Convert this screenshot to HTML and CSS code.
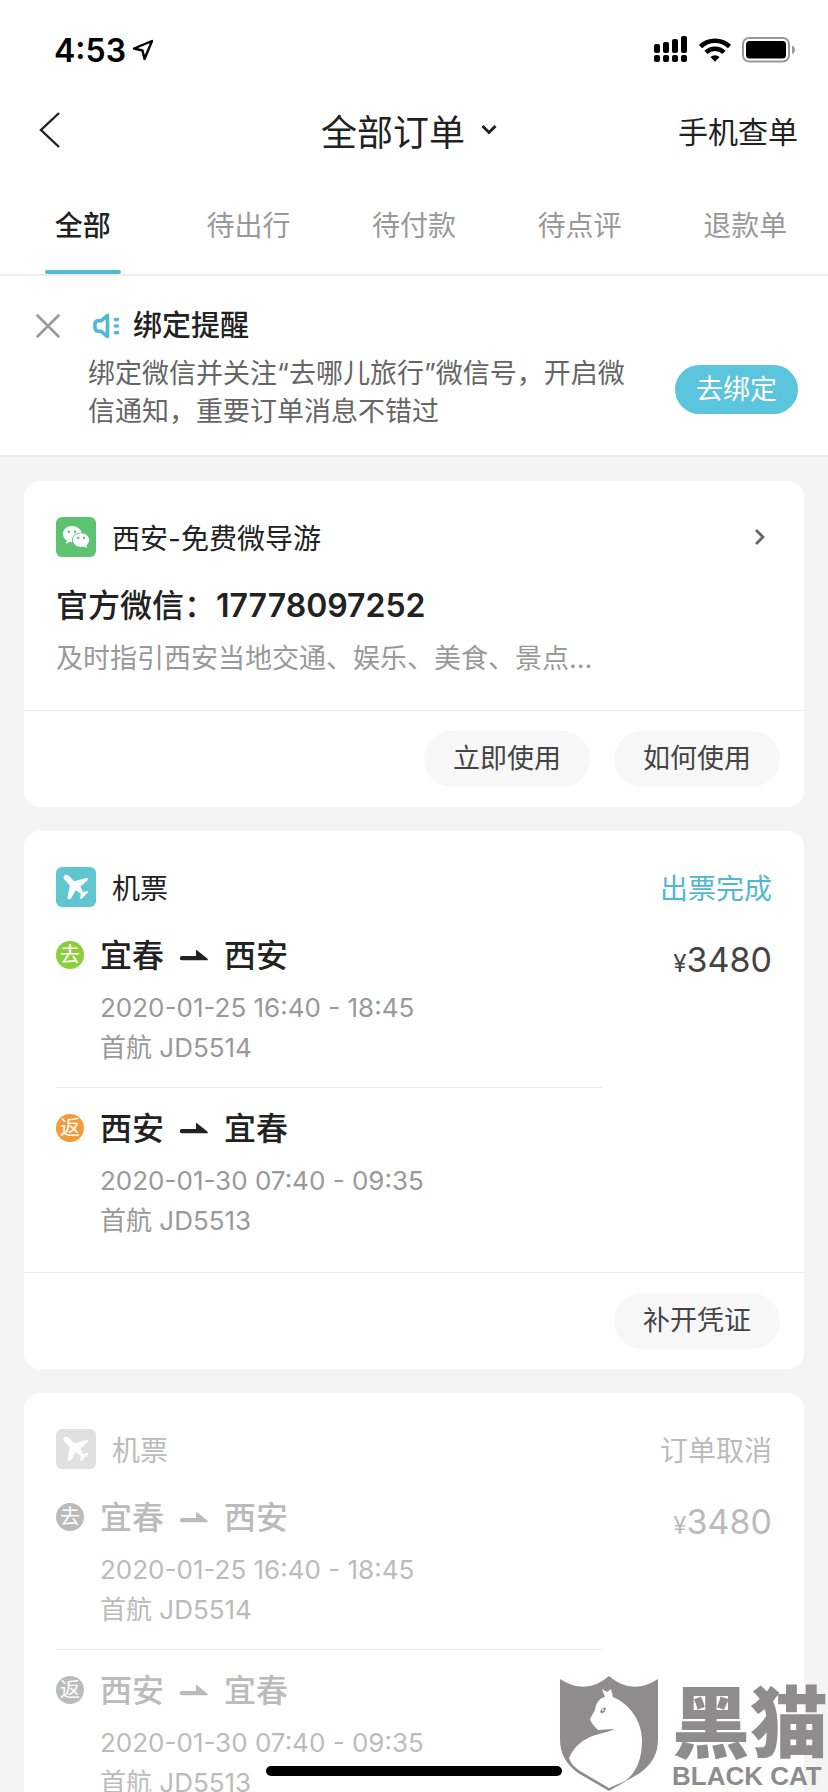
FILE: index.html
```html
<!DOCTYPE html>
<html lang="zh-CN">
<head>
    <meta charset="UTF-8">
    <meta name="viewport" content="width=device-width, initial-scale=1.0">
    <title>全部订单</title>
    <link rel="stylesheet" href="styles.css">
</head>
<body>

    <!-- 公用图标 -->
    <svg class="symbols" aria-hidden="true">
        <symbol id="plane" viewBox="0 0 40 40">
            <path fill="#fff" d="M8.4 8.4c1.3-1.1 3.2-.7 4.6.6l5.300 5.200 12-3.200c1.600-.4 2.500 1.300 1.300 2.300l-7.200 6.100 2.300 5.600 4.600-.9c.8-.1 1.100.7.6 1.300l-6.300 6.400c-.6.6-1.400.2-1.300-.6l.4-4.600-4.900-3.400-4.900 8.200c-.8 1.300-3.600 1-3.500-.7l2.500-12.300-5.400-5.900c-1.200-1.400-1.300-3-.1-4.100z"/>
        </symbol>
        <symbol id="arrow" viewBox="0 0 28 12">
            <path fill="currentColor" d="M2 6h14V.8c0-.7.5-.9 1-.6l10.300 8.200c.9.800.6 1.900-.6 1.900H2a2 2 0 0 1 0-4.300z"/>
        </symbol>
    </svg>

    <div class="page">

        <!-- 状态栏 -->
        <div class="status-bar">
            <span class="time">4:53</span>
            <svg class="location" width="22" height="22" viewBox="0 0 22 22"><path d="M2 9.500 20 2l-7.500 18-2-8.500z" fill="none" stroke="#000" stroke-width="2.400" stroke-linejoin="round"/></svg>
            <svg class="signal" width="34" height="28" viewBox="0 0 34 28">
                <rect x="0" y="8" width="6" height="9" rx="2"/><rect x="9" y="6" width="6" height="11" rx="2"/>
                <rect x="18" y="3" width="6" height="14" rx="2"/><rect x="27" y="0" width="6" height="17" rx="2"/>
                <rect x="0" y="19" width="6" height="7" rx="2"/><rect x="9" y="19" width="6" height="7" rx="2"/>
                <rect x="18" y="19" width="6" height="7" rx="2"/><rect x="27" y="19" width="6" height="7" rx="2"/>
            </svg>
            <svg class="wifi" width="32" height="24" viewBox="0 0 32 24">
                <path d="M1.500 8.600a21 21 0 0 1 29 0" fill="none" stroke="#000" stroke-width="4.600"/>
                <path d="M7 14.300a13 13 0 0 1 18 0" fill="none" stroke="#000" stroke-width="4.600"/>
                <path d="M11.500 19a6.500 6.500 0 0 1 9 0L16 23.700z"/>
            </svg>
            <svg class="battery" width="53" height="26" viewBox="0 0 53 26">
                <rect x="1" y="1" width="46" height="23.500" rx="6" fill="none" stroke="#999" stroke-width="2"/>
                <rect x="4" y="4" width="40" height="17.500" rx="3.500"/>
                <path d="M50 8.500c4 1.600 4 7 0 8.600z" fill="#999"/>
            </svg>
        </div>

        <!-- 标题栏 -->
        <header class="nav">
            <button class="back" aria-label="返回">
                <svg width="22" height="36" viewBox="0 0 22 36"><path d="M20 1 2 18l18 17" fill="none" stroke="#222" stroke-width="2.400"/></svg>
            </button>
            <button class="nav-title">全部订单
                <svg width="16" height="12" viewBox="0 0 16 12"><path d="m1.500 2 6.500 6.500L14.500 2" fill="none" stroke="#222" stroke-width="3"/></svg>
            </button>
            <a class="nav-link" href="#">手机查单</a>
        </header>

        <nav class="tabs">
            <a class="tab active" href="#">全部</a>
            <a class="tab" href="#">待出行</a>
            <a class="tab" href="#">待付款</a>
            <a class="tab" href="#">待点评</a>
            <a class="tab" href="#">退款单</a>
        </nav>

        <!-- 绑定提醒 -->
        <section class="notice">
            <button class="close" aria-label="关闭">
                <svg width="24" height="24" viewBox="0 0 24 24"><path d="m1.500 1.500 21 21m0-21-21 21" stroke="#999" stroke-width="2.600" stroke-linecap="round"/></svg>
            </button>
            <div class="notice-text">
                <h2>
                    <svg width="28" height="26" viewBox="0 0 28 26" fill="none" stroke="#4fb8d3"><path d="M14.500 2.500v21L8 18.200H5.500Q2 18.200 2 15v-4q0-3.200 3.500-3.200H8z" stroke-width="3.600" stroke-linejoin="round"/><path d="M22.500 6.500h2m-2 6.500h2m-2 6.800h2" stroke-width="3.600" stroke-linecap="round"/></svg>
                    绑定提醒
                </h2>
                <p>绑定微信并关注“去哪儿旅行”微信号，开启微信通知，重要订单消息不错过</p>
            </div>
            <button class="bind">去绑定</button>
        </section>

        <main class="orders">

            <!-- 微导游 -->
            <article class="card">
                <div class="card-body">
                    <div class="card-head">
                        <span class="icon wechat">
                            <svg width="40" height="40" viewBox="0 0 40 40">
                                <path fill="#fff" d="M16 9c5 0 9 3 9.600 6.500C20 15.500 16 19 16 23v2.300l-2.700-.3-3.400 2 .9-3.300C8.500 22 7 19.800 7 17c0-4.500 4-8 9-8z"/>
                                <path fill="#fff" d="M25 16.200c4.600 0 8.200 3 8.200 6.900 0 2.300-1.100 4-2.900 5.300l.8 2.900-3.200-1.700c-6 1.500-11.100-2-11.100-6.500 0-3.900 3.600-6.900 8.200-6.900z"/>
                                <g fill="#5dc272"><circle cx="13" cy="14.800" r="1.300"/><circle cx="19" cy="14.800" r="1.300"/><circle cx="22.300" cy="21" r="1.200"/><circle cx="28" cy="21" r="1.200"/></g>
                            </svg>
                        </span>
                        <span class="card-title">西安-免费微导游</span>
                        <svg class="more" width="12" height="18" viewBox="0 0 12 18"><path d="m2 2 7 7-7 7" fill="none" stroke="#666" stroke-width="2.800"/></svg>
                    </div>
                    <h3 class="account">官方微信：<span>17778097252</span></h3>
                    <p class="intro">及时指引西安当地交通、娱乐、美食、景点...</p>
                </div>
                <div class="card-foot">
                    <button class="button">立即使用</button>
                    <button class="button">如何使用</button>
                </div>
            </article>

            <!-- 机票：出票完成 -->
            <article class="card">
                <div class="card-body">
                    <div class="card-head">
                        <span class="icon flight"><svg width="40" height="40"><use href="#plane"/></svg></span>
                        <span class="card-title">机票</span>
                        <span class="state">出票完成</span>
                    </div>
                    <div class="trip">
                        <div class="legs">
                            <div class="leg">
                                <span class="badge go">去</span>
                                <div>
                                    <h3 class="route">宜春 <svg width="28" height="12"><use href="#arrow"/></svg> 西安</h3>
                                    <p>2020-01-25 16:40 - 18:45</p>
                                    <p>首航 JD5514</p>
                                </div>
                            </div>
                            <div class="leg">
                                <span class="badge return">返</span>
                                <div>
                                    <h3 class="route">西安 <svg width="28" height="12"><use href="#arrow"/></svg> 宜春</h3>
                                    <p>2020-01-30 07:40 - 09:35</p>
                                    <p>首航 JD5513</p>
                                </div>
                            </div>
                        </div>
                        <div class="price"><small>¥</small>3480</div>
                    </div>
                </div>
                <div class="card-foot">
                    <button class="button">补开凭证</button>
                </div>
            </article>

            <!-- 机票：订单取消 -->
            <article class="card cancelled">
                <div class="card-body">
                    <div class="card-head">
                        <span class="icon flight"><svg width="40" height="40"><use href="#plane"/></svg></span>
                        <span class="card-title">机票</span>
                        <span class="state">订单取消</span>
                    </div>
                    <div class="trip">
                        <div class="legs">
                            <div class="leg">
                                <span class="badge go">去</span>
                                <div>
                                    <h3 class="route">宜春 <svg width="28" height="12"><use href="#arrow"/></svg> 西安</h3>
                                    <p>2020-01-25 16:40 - 18:45</p>
                                    <p>首航 JD5514</p>
                                </div>
                            </div>
                            <div class="leg">
                                <span class="badge return">返</span>
                                <div>
                                    <h3 class="route">西安 <svg width="28" height="12"><use href="#arrow"/></svg> 宜春</h3>
                                    <p>2020-01-30 07:40 - 09:35</p>
                                    <p>首航 JD5513</p>
                                </div>
                            </div>
                        </div>
                        <div class="price"><small>¥</small>3480</div>
                    </div>
                </div>
            </article>
        </main>

        <div class="home-bar"></div>

        <!-- 水印 -->
        <div class="watermark">
            <svg width="98" height="116" viewBox="0 0 98 116">
                <path fill="#8f8c8e" d="M0 3Q26 20 49 0 72 20 98 3V63C98 78 92 88 80 97L49 115 18 97C6 88 0 78 0 63z"/>
                <path fill="#fff" d="M42 13 47 16 51 13 53 21C70 28 82 46 82 64 82 84 76 97 65 105L49 112 20 95C13 90 11 87 9 82 17 65 30 60 43 57 50 55 53 54 54 53L38 54C35 51 31 47 30 43L35 34C36 26 40 22 45 21z"/>
                <path fill="#8f8c8e" d="M40 36q2-5 6-4-1 6-5 5z"/>
                <circle cx="43" cy="34" r="1" fill="#fff"/>
            </svg>
            <div class="watermark-text">
                <span class="cn">黑猫</span>
                <span class="en">BLACK CAT</span>
            </div>
        </div>
    </div>

</body>
</html>
```
FILE: styles.css
```css
* {
    box-sizing: border-box;
}
body {
    margin: 0;
    font-family: Inter, "Noto Sans CJK SC", sans-serif;
    font-size: 26px;
    color: #222;
    background-color: #f4f4f4;
}
h2, h3, p {
    margin: 0;
}
button {
    padding: 0;
    border: none;
    background: none;
    color: inherit;
    font-family: inherit;
    cursor: pointer;
}
a {
    color: inherit;
    text-decoration: none;
}
svg {
    display: block;
    flex: none;
}
.symbols {
    position: absolute;
    width: 0;
    height: 0;
}
.page {
    position: relative;
    height: 100vh;
    overflow: hidden;
}

/* 状态栏 */
.status-bar {
    display: flex;
    align-items: center;
    height: 88px;
    padding: 12px 33px 0 54px;
    background-color: #fff;
}
.time {
    font-size: 32px;
    font-weight: 600;
    color: #000;
}
.location {
    margin-left: 6px;
}
.signal {
    margin-left: auto;
}
.wifi {
    margin: 0 11px;
}

/* 标题栏 */
.nav {
    display: grid;
    grid-template-columns: 1fr auto 1fr;
    align-items: center;
    height: 84px;
    padding: 0 30px;
    background-color: #fff;
}
.back {
    justify-self: start;
    padding: 0 9px;
}
.nav-title {
    display: flex;
    align-items: center;
    gap: 16px;
    padding-right: 10px;
    font-size: 36px;
}
.nav-link {
    justify-self: end;
    font-size: 30px;
}

.tabs {
    display: flex;
    height: 104px;
    border-bottom: 2px solid #eee;
    background-color: #fff;
}
.tab {
    flex: 1;
    display: flex;
    flex-direction: column;
    align-items: center;
    justify-content: space-between;
    padding-top: 34px;
    font-size: 28px;
    line-height: 40px;
    color: #999;
}
.tab.active {
    color: #222;
    font-weight: 500;
}
.tab.active::after {
    content: "";
    width: 76px;
    height: 4px;
    border-radius: 2px;
    background-color: #54b9d4;
}

/* 绑定提醒 */
.notice {
    display: flex;
    align-items: flex-start;
    padding: 28px 30px 24px 36px;
    border-bottom: 2px solid #ebebeb;
    background-color: #fff;
}
.close {
    margin-top: 10px;
}
.notice-text {
    flex: 1;
    padding: 0 40px 0 28px;
}
.notice h2 {
    display: flex;
    align-items: center;
    gap: 12px;
    padding-left: 5px;
    font-size: 29px;
    font-weight: 500;
    line-height: 44px;
}
.notice p {
    margin-top: 7px;
    font-size: 27px;
    line-height: 38px;
    color: #666;
}
.bind {
    align-self: flex-end;
    padding: 0 21px;
    margin-bottom: 17px;
    border-radius: 25px;
    background-color: #5ac5dd;
    color: #fff;
    font-size: 27px;
    line-height: 49px;
}

/* 订单卡片 */
.orders {
    display: flex;
    flex-direction: column;
    gap: 24px;
    padding: 24px;
}
.card {
    border-radius: 16px;
    background-color: #fff;
}
.card-body {
    padding: 36px 32px 31px;
}
.card-head {
    display: flex;
    align-items: center;
    height: 40px;
    margin-bottom: 27px;
    font-size: 28px;
}
.card-title {
    flex: 1;
    margin-left: 16px;
}
.icon {
    border-radius: 6px;
}
.wechat {
    background-color: #5dc272;
}
.flight {
    background-color: #5fc6d1;
}
.more {
    margin-right: 6px;
}
.state {
    color: #4fb8d3;
}
.account {
    font-size: 32px;
    font-weight: 500;
    line-height: 44px;
}
.account span {
    font-weight: 600;
}
.intro {
    margin-top: 11px;
    font-size: 27px;
    line-height: 40px;
    color: #999;
}
.card-foot {
    display: flex;
    justify-content: flex-end;
    gap: 24px;
    padding: 20px 24px;
    border-top: 1px solid #ebebeb;
}
.button {
    padding: 0 29px;
    border-radius: 28px;
    background-color: #f7f7f7;
    color: #444;
    font-size: 27px;
    line-height: 56px;
}

/* 航班 */
.trip {
    display: flex;
}
.legs {
    flex: 1;
}
.leg {
    display: flex;
    gap: 16px;
    line-height: 40px;
    color: #999;
}
.leg + .leg {
    margin-top: 19px;
    padding-top: 19px;
    border-top: 1px solid #ebebeb;
}
.badge {
    width: 28px;
    height: 28px;
    margin-top: 7px;
    border-radius: 50%;
    color: #fff;
    font-size: 20px;
    line-height: 28px;
    text-align: center;
}
.go {
    background-color: #8bce3c;
}
.return {
    background-color: #f29b38;
}
.route {
    display: flex;
    align-items: center;
    gap: 16px;
    margin-bottom: 10px;
    color: #222;
    font-size: 32px;
    font-weight: 500;
    line-height: 44px;
}
.price {
    width: 170px;
    padding-top: 4px;
    color: #444;
    font-size: 34px;
    line-height: 44px;
    text-align: right;
}
.price small {
    font-size: 24px;
}

/* 已取消的订单 */
.cancelled, .cancelled .leg, .cancelled .route, .cancelled .price, .cancelled .state {
    color: #bbb;
}
.cancelled .flight {
    background-color: #e0e0e0;
}
.cancelled .badge {
    background-color: #bbb;
}

.home-bar {
    position: absolute;
    bottom: 16px;
    left: 50%;
    width: 296px;
    height: 10px;
    margin-left: -148px;
    border-radius: 5px;
    background-color: #000;
}

/* 水印 */
.watermark {
    position: absolute;
    right: 0;
    bottom: 0;
    display: flex;
    align-items: flex-end;
    gap: 14px;
    color: #8f8c8e;
}
.watermark-text {
    display: flex;
    flex-direction: column;
    gap: 5px;
    padding-bottom: 2px;
}
.cn {
    font-family: "Noto Sans CJK SC", sans-serif;
    font-size: 78px;
    font-weight: 900;
    line-height: 78px;
}
.en {
    font-family: "Liberation Sans", sans-serif;
    font-size: 26px;
    font-weight: 700;
    line-height: 28px;
}
```
